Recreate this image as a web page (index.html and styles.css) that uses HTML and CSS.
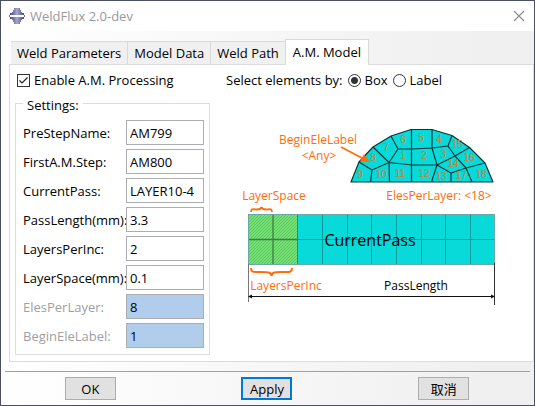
FILE: index.html
```html
<!DOCTYPE html>
<html lang="en">
<head>
<meta charset="utf-8">
<title>WeldFlux 2.0-dev</title>
<link rel="stylesheet" href="styles.css">
</head>
<body>
<form class="window">
  <header class="titlebar">
    <svg class="app-icon" width="16" height="16" viewBox="0 0 16 16" aria-hidden="true">
      <defs>
        <linearGradient id="metal"><stop offset="0" stop-color="#46468a"/><stop offset=".5" stop-color="#a6a6cc"/><stop offset="1" stop-color="#46468a"/></linearGradient>
      </defs>
      <path fill="url(#metal)" d="M5 0h6v2h1v2h1v1h2v2H1V5h2V4h1V2h1zM1 9h14v2h-2v1h-1v2h-1v2H5v-2H4v-2H3v-1H1z"/>
      <path fill="#6a6aa4" d="M0 7h1v2H0zM15 7h1v2h-1z"/>
    </svg>
    <h1 class="title">WeldFlux 2.0-dev</h1>
    <button type="button" class="close" aria-label="Close">
      <svg width="12" height="12" viewBox="0 0 12 12"><path d="M1 1l10 10M11 1L1 11" stroke="#8c8c8c" stroke-width="1.1"/></svg>
    </button>
  </header>

  <main class="content">
    <div class="tabs" role="tablist">
      <button type="button" class="tab" role="tab">Weld Parameters</button>
      <button type="button" class="tab" role="tab">Model Data</button>
      <button type="button" class="tab" role="tab">Weld Path</button>
      <button type="button" class="tab active" role="tab" aria-selected="true">A.M. Model</button>
    </div>
    <section class="panel" role="tabpanel">
      <div class="left">
        <label class="option"><input type="checkbox" class="check" checked>Enable A.M. Processing</label>
        <fieldset class="settings">
          <legend>Settings:</legend>
          <div class="fields">
            <label for="pre">PreStepName:</label><input id="pre" type="text" value="AM799">
            <label for="first">FirstA.M.Step:</label><input id="first" type="text" value="AM800">
            <label for="pass">CurrentPass:</label><input id="pass" type="text" value="LAYER10-4">
            <label for="length">PassLength(mm):</label><input id="length" type="text" value="3.3">
            <label for="inc">LayersPerInc:</label><input id="inc" type="text" value="2">
            <label for="space">LayerSpace(mm):</label><input id="space" type="text" value="0.1">
            <label for="eles" class="off">ElesPerLayer:</label><input id="eles" type="text" value="8" disabled>
            <label for="begin" class="off">BeginEleLabel:</label><input id="begin" type="text" value="1" disabled>
          </div>
        </fieldset>
      </div>
      <div class="right">
        <div class="select-by" role="radiogroup" aria-labelledby="by">
          <span id="by">Select elements by:</span>
          <label class="option"><input type="radio" name="by" class="radio" checked>Box</label>
          <label class="option"><input type="radio" name="by" class="radio">Label</label>
        </div>
        <svg class="diagram" width="265" height="190" viewBox="240 120 265 190" role="img" aria-label="Pass and layer element diagram">
          <defs>
            <pattern id="hatch" width="3" height="3" patternUnits="userSpaceOnUse">
              <rect width="3" height="3" fill="#78df74"/>
              <path d="M-1 1l2-2M0 3l3-3M2 4l2-2" stroke="#4fc45c" stroke-width=".8"/>
            </pattern>
          </defs>
          <g stroke="#04383b" stroke-width="1.2" stroke-linejoin="round">
            <path fill="#08d9d9" d="M351 182L359 162L373 147L391 136L411 129.500H432L452 135.500L469.500 147.500L485 163L493 182Z"/>
            <path fill="none" d="M359 162L372 170L370.500 182M372 170L389 162.500L373 147M389.500 182L389 162.500L398 149L391 136M398 149H412L432 148L448 146L452 135.500M411.500 129.500V182M389 162.500L412 165H437M432 129.500V148L437 165L431.500 182M448 146L455 156L466 168L472 182M469.500 147.500L455 156L437 165L451 173V182M451 173L466 168L485 163"/>
          </g>
          <g class="numbers">
            <text x="403" y="159">1</text><text x="424" y="159">2</text><text x="443" y="158">3</text>
            <text x="439" y="143">4</text><text x="421" y="141">5</text><text x="403" y="143">6</text>
            <text x="386" y="151">7</text><text x="373" y="161">8</text><text x="360" y="178">9</text>
            <text x="381" y="178">10</text><text x="400" y="177">11</text><text x="424" y="177">12</text>
            <text x="441" y="180">13</text><text x="453" y="167">14</text><text x="457" y="148">15</text>
            <text x="469" y="161">16</text><text x="461" y="179">17</text><text x="481" y="178">18</text>
          </g>
          <path d="M341 147L362 158" stroke="#ff6d0a" stroke-width="1.600"/>
          <path d="M370 162L360 161.500L364 154Z" fill="#ff6d0a"/>
          <g class="note">
            <text x="318" y="144">BeginEleLabel</text>
            <text x="319" y="160">&lt;Any&gt;</text>
            <text x="274" y="200">LayerSpace</text>
            <text x="439" y="200">ElesPerLayer: &lt;18&gt;</text>
            <text x="286" y="290">LayersPerInc</text>
          </g>
          <rect x="248" y="215" width="247" height="49" fill="#08d9d9"/>
          <rect x="248" y="215" width="49" height="49" fill="url(#hatch)"/>
          <path d="M297.500 239.500H495M297.500 215V264M322.500 215V264M347.500 215V264M371.500 215V264M396.500 215V264M421.500 215V264M445.500 215V264M470.500 215V264" stroke="#079b9e" fill="none"/>
          <path d="M248 239.500H297M273 215V264" stroke="#397f41" stroke-width="1.300"/>
          <rect x="248.500" y="214.500" width="246" height="50" fill="none" stroke="#6aa9a5"/>
          <path d="M251 212C251 208 254 209.500 257 209.500C260 209.500 261 209 261.500 207C262 209 263 209.500 266 209.500C269 209.500 272 208 272 212" fill="none" stroke="#ff6d0a" stroke-width="1.800"/>
          <path d="M251 268C251 273 254 272 261 272C268 272 271 272 271.500 276C272 272 275 272 282 272C289 272 292 273 292 268" fill="none" stroke="#ff6d0a" stroke-width="2"/>
          <path d="M248.500 264V302" stroke="#777"/>
          <path d="M494.500 263V305" stroke="#333"/>
          <path d="M250 296.500H493" stroke="#111"/>
          <path d="M248 296.500l4-2v4zM495 296.500l-4-2v4z" fill="#111"/>
          <text class="pass" x="370" y="246">CurrentPass</text>
          <text class="length" x="416" y="290">PassLength</text>
        </svg>
      </div>
    </section>
  </main>

  <hr class="divider">
  <footer class="actions">
    <button type="button" class="btn">OK</button>
    <button type="submit" class="btn primary">Apply</button>
    <button type="button" class="btn" lang="zh-CN">取消</button>
  </footer>
</form>
</body>
</html>
```
FILE: styles.css
```css
* { box-sizing: border-box; }

body {
  margin: 0;
  font: 13px/18px "Open Sans", "Noto Sans CJK SC", sans-serif;
  color: #000;
}

button, input { font: inherit; color: inherit; }

.window {
  display: flex;
  flex-direction: column;
  min-height: 100vh;
  border: 1px solid #4a505f;
  background: linear-gradient(90deg, #fff, #f0f0f0 90%);
}

.titlebar {
  display: flex;
  align-items: center;
  gap: 5px;
  height: 30px;
  padding: 0 9px 0 8px;
  background: #fff;
}

.title {
  flex: 1;
  margin: 0;
  font-size: 13px;
  font-weight: 400;
  color: #999;
}

.close {
  display: flex;
  padding: 0;
  border: 0;
  background: none;
}

.content {
  flex: 1;
  display: flex;
  flex-direction: column;
  padding: 8px 0 0 8px;
}

.tabs {
  display: flex;
  align-items: flex-end;
  padding-left: 2px;
}

.tab {
  height: 23px;
  padding: 0 6px;
  border: 1px solid #d9d9d9;
  border-width: 1px 1px 0 0;
  background: #f0f0f0;
  white-space: nowrap;
}

.tab.active {
  position: relative;
  height: 26px;
  margin: 0 0 -1px -1px;
  padding: 0 7px 1px;
  border-left-width: 1px;
  background: #fff;
}

.panel {
  flex: 1;
  display: flex;
  gap: 16px;
  padding: 6px 5px 5px;
  border: 1px solid #dcdcdc;
  background: #fff;
}

.option {
  display: flex;
  align-items: center;
  gap: 4px;
}

.left > .option { padding-left: 2px; }

.check, .radio {
  appearance: none;
  width: 13px;
  height: 13px;
  margin: 0;
  border: 1px solid #333;
  background: #fff;
}

.check:checked {
  background: url("data:image/svg+xml,%3Csvg xmlns='http://www.w3.org/2000/svg' viewBox='0 0 11 11'%3E%3Cpath d='M1.500 5.500l2.500 2.500 5.500-5.500' fill='none' stroke='%23222' stroke-width='1.200'/%3E%3C/svg%3E");
}

.radio { border-radius: 50%; }

.radio:checked { background: radial-gradient(circle, #333 3px, #fff 4px); }

.settings {
  min-width: 0;
  margin: 3px 0 0;
  padding: 0 5px 6px 7px;
  border: 1px solid #dcdcdc;
}

.settings legend {
  padding: 4px 4px 0;
}

.fields {
  display: grid;
  grid-template-columns: 103px 78px;
  grid-auto-rows: 25px;
  align-items: center;
  row-gap: 4px;
  padding-top: 6px;
}

.fields label { white-space: nowrap; }

.fields .off { color: #a0a0a0; }

.fields input {
  width: 100%;
  height: 25px;
  padding: 0 3px;
  border: 1px solid #abadb3;
  border-radius: 0;
  background: #fff;
}

.fields input:disabled {
  background: #b1cdec;
  color: #000;
}

.right {
  flex: 1;
}

.select-by {
  display: flex;
  align-items: center;
  gap: 5px;
}

.diagram {
  display: block;
  margin: 31px 0 0 14px;
}

.diagram text { text-anchor: middle; }

.numbers {
  font: 10px "Liberation Sans", sans-serif;
  fill: #c48435;
}

.note {
  font-size: 12px;
  fill: #ff6d0a;
}

.pass { font-size: 16px; }

.length { font-size: 12px; }

.divider {
  width: auto;
  margin: 9px 4px 0;
  border: 0;
  border-top: 1px solid #a0a0a0;
}

.actions {
  display: grid;
  grid-template-columns: repeat(3, 1fr);
  justify-items: center;
  padding: 5px 2px 5px 1px;
}

.btn {
  width: 51px;
  height: 23px;
  padding: 0;
  border: 1px solid #adadad;
  background: #e1e1e1;
}

.btn.primary { border: 2px solid #0078d7; }
```
